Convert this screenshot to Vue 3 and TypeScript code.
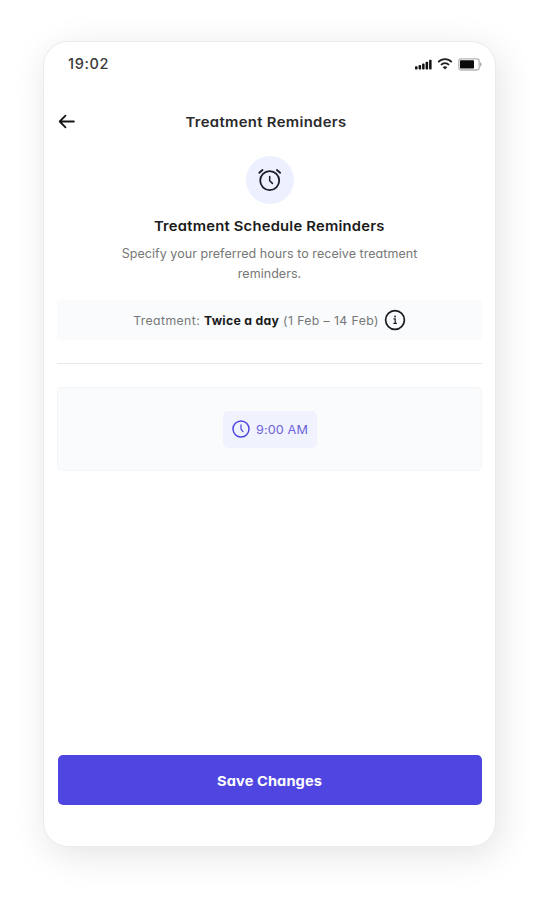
<script setup lang="ts">
interface Treatment {
  frequency: string
  period: string
}

const treatment: Treatment = { frequency: 'Twice a day', period: '(1 Feb – 14 Feb)' }
const times: string[] = ['9:00 AM']
</script>

<template>
  <main class="stage">
    <section class="phone">
      <div class="status">
        <span class="clock">19:02</span>
        <div class="indicators">
          <svg class="signal" width="17" height="11" viewBox="0 0 17 11">
            <rect x="0" y="7.2" width="2.6" height="3.3" rx=".9" />
            <rect x="3.6" y="6" width="2.5" height="4.5" rx=".8" />
            <rect x="7.1" y="4.6" width="2.5" height="5.9" rx=".8" />
            <rect x="10.6" y="2.7" width="2.5" height="7.8" rx=".8" />
            <rect x="14.1" y=".7" width="2.5" height="9.8" rx=".8" />
          </svg>
          <svg class="wifi" width="16" height="12" viewBox="0 0 16 12" fill="none" stroke="#222" stroke-width="1.7">
            <path d="M1.2 4.1C5 .1 11 .1 14.8 4.100" />
            <path d="M3.9 6.900c2.4-2.4 5.8-2.4 8.2 0" />
            <path d="M8 11.5 5.7 9.200c1.300-1.200 3.300-1.200 4.600 0Z" fill="#222" stroke="none" />
          </svg>
          <svg class="battery" width="24" height="13" viewBox="0 0 24 13">
            <rect x=".8" y=".8" width="20.4" height="11.2" rx="2.4" fill="none" stroke="#b5b5b5" stroke-width="1.3" />
            <rect x="2" y="2.3" width="14" height="8.2" rx=".8" fill="#0b0b0b" />
            <path d="M22 4c2 1 2 3.900 0 4.900Z" fill="#aaa" />
          </svg>
        </div>
      </div>

      <header class="nav">
        <button class="back" aria-label="Back">
          <svg width="18" height="16" viewBox="0 0 18 16" fill="none" stroke="#161616" stroke-width="1.8" stroke-linecap="round" stroke-linejoin="round">
            <path d="M15.900 7.500H1.700M7.500 1.700 1.700 7.500l5.800 5.800" />
          </svg>
        </button>
        <h1 class="title">Treatment Reminders</h1>
      </header>

      <div class="intro">
        <div class="badge">
          <svg width="24" height="24" viewBox="0 0 24 24" fill="none" stroke="#1b1c2b" stroke-width="1.8" stroke-linecap="round" stroke-linejoin="round">
            <circle cx="11.700" cy="12.600" r="9.500" />
            <path d="M1.300 4.800 4.500 2M22.100 4.800 18.900 2" />
            <path d="M11.700 8.400v4.400l2.700 2.600" stroke-width="1.500" />
          </svg>
        </div>
        <h2 class="heading">Treatment Schedule Reminders</h2>
        <p class="desc">Specify your preferred hours to receive treatment<br />reminders.</p>
      </div>

      <div class="summary">
        <p class="plan"><span class="label">Treatment:</span> <b class="freq">{{ treatment.frequency }}</b> <span class="period">{{ treatment.period }}</span></p>
        <svg width="22" height="22" viewBox="0 0 22 22" fill="none" stroke="#1c1c1c">
          <circle cx="11" cy="11" r="9.400" stroke-width="1.700" />
          <path d="M9.500 9.900h1.700v4.400M9.400 14.400h3.500" stroke-width="1.200" />
          <circle cx="11" cy="7.500" r=".9" fill="#1c1c1c" stroke="none" />
        </svg>
      </div>

      <hr class="rule" />

      <div class="slots">
        <button v-for="time in times" :key="time" class="slot">
          <svg width="18" height="18" viewBox="0 0 18 18" fill="none" stroke="#4f46e0" stroke-linecap="round" stroke-linejoin="round">
            <circle cx="9" cy="9" r="8" stroke-width="1.500" />
            <path d="M9 4.800v4.300l2 2.600" stroke-width="1.200" />
          </svg>
          <span class="time">{{ time }}</span>
        </button>
      </div>

      <button class="save"><span class="save-label">Save Changes</span></button>
    </section>
  </main>
</template>

<style>
body {
  background: #fff;
}
</style>

<style scoped>
.stage {
  box-sizing: border-box;
  height: 900px;
  padding: 41px 52px 0 43px;
  overflow: hidden;
  font-family: Inter, "Liberation Sans", sans-serif;
  font-feature-settings: "cv11";
}
.phone {
  box-sizing: border-box;
  display: flex;
  flex-direction: column;
  height: 806px;
  padding: 0 13px 41px;
  border: 1px solid #ebebeb;
  border-radius: 25px;
  background: #fff;
  box-shadow: 4px 8px 36px rgba(0, 0, 0, 0.11);
}
h1, h2, p {
  margin: 0;
  white-space: nowrap;
}
button {
  padding: 0;
  border: 0;
  background: none;
  font: inherit;
  font-feature-settings: inherit;
}
svg {
  display: block;
  flex: none;
}
.status {
  display: flex;
  justify-content: space-between;
  align-items: center;
  height: 43px;
  padding: 0 0 0 11px;
}
.clock {
  color: #3a3a3a;
  font-size: 14.5px;
  font-weight: 500;
  letter-spacing: 0.65px;
}
.indicators {
  display: flex;
  align-items: center;
  gap: 5px;
  padding-top: 1px;
}
.signal {
  fill: #111;
}
.nav {
  display: grid;
  grid-template-columns: 18px 1fr 26px;
  align-items: center;
  height: 36px;
  margin-top: 19px;
  padding-left: 1px;
}
.title {
  color: #2a2a2a;
  font-size: 13.5px;
  font-weight: 600;
  line-height: 20px;
  letter-spacing: 0.3px;
  text-align: center;
  transform: scaleX(1.1);
}
.intro {
  display: flex;
  flex-direction: column;
  align-items: center;
  height: 160px;
  padding-top: 16px;
  box-sizing: border-box;
}
.badge {
  display: grid;
  place-items: center;
  width: 48px;
  height: 48px;
  border-radius: 50%;
  background: #edf0fe;
}
.heading {
  margin-top: 12px;
  color: #1b1b1b;
  font-size: 13.75px;
  font-weight: 600;
  line-height: 20px;
  letter-spacing: 0.2px;
  transform: scaleX(1.075);
}
.desc {
  margin-top: 8px;
  color: #777;
  font-size: 12.5px;
  line-height: 19.5px;
  letter-spacing: 0.05px;
  text-align: center;
}
.summary {
  display: flex;
  justify-content: center;
  align-items: center;
  gap: 5px;
  height: 40px;
  border-radius: 3px;
  background: #f9fbfd;
}
.plan {
  color: #777;
  font-size: 12.25px;
  letter-spacing: 0.4px;
}
.freq {
  color: #1a1a1a;
  font-weight: 650;
  letter-spacing: 0.3px;
}
.rule {
  align-self: stretch;
  height: 1px;
  margin: 23px 0;
  border: 0;
  background: #e9e9eb;
}
.slots {
  box-sizing: border-box;
  display: flex;
  justify-content: center;
  align-items: center;
  height: 84px;
  border: 1px solid #f4f5f7;
  border-radius: 5px;
  background: #fafbfd;
}
.slot {
  display: flex;
  justify-content: center;
  align-items: center;
  gap: 6px;
  width: 94px;
  height: 37px;
  border-radius: 5px;
  background: #f0f2fe;
}
.time {
  padding-top: 2px;
  color: #6b63d8;
  font-size: 11.5px;
  letter-spacing: 0.1px;
  transform: scaleX(1.1);
  transform-origin: left;
  margin-right: 3px;
}
.save {
  height: 50px;
  margin: auto 0 0 1px;
  padding-top: 2px;
  border-radius: 5px;
  background: #4f46e2;
  color: #fff;
  font-size: 13.5px;
  font-weight: 700;
  letter-spacing: 0.1px;
}
.save-label {
  display: inline-block;
  transform: scaleX(1.08);
}
</style>
